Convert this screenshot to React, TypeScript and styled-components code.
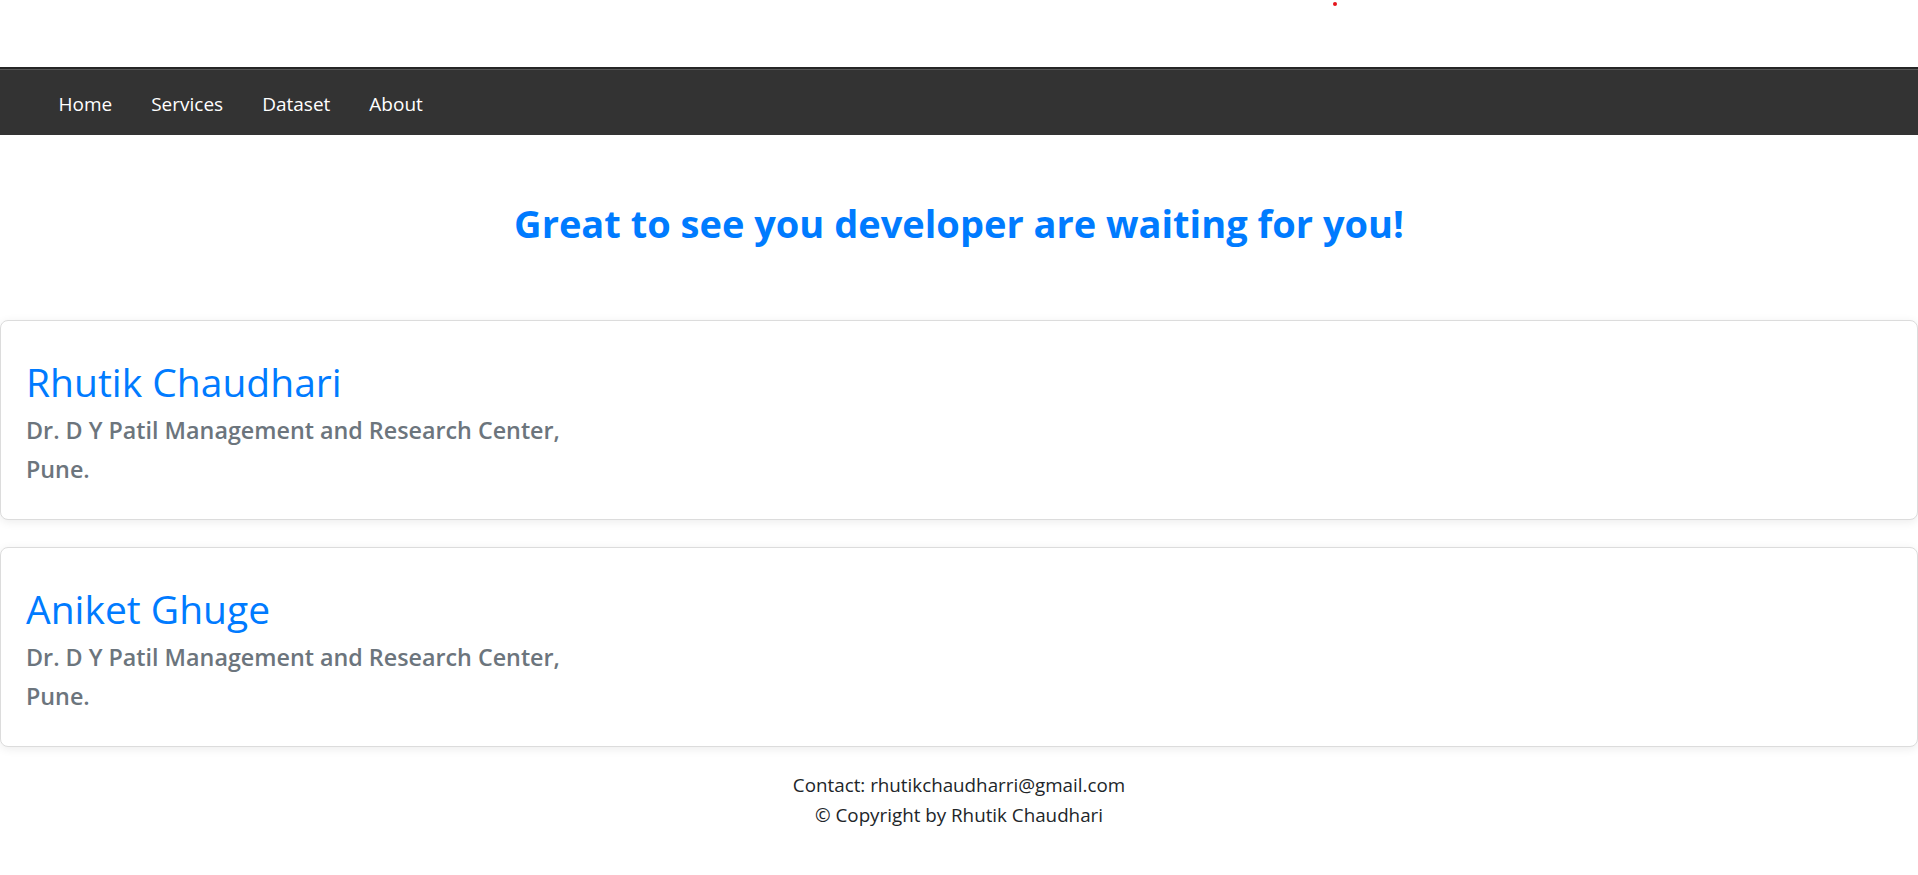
import * as React from 'react';
import styled, { createGlobalStyle } from 'styled-components';

const fontStack = '"Open Sans", "Noto Sans", "Liberation Sans", sans-serif';
const primary = '#007bff';
const muted = '#6c757d';

const GlobalStyle = createGlobalStyle`
  html, body {
    margin: 0;
    padding: 0;
    background: #fff;
  }
  body {
    font-family: ${fontStack};
    color: #212529;
  }
  * {
    box-sizing: border-box;
  }
`;

const TopStrip = styled.div`
  position: relative;
  height: 67px;
`;

// small red marker near the top edge
const Marker = styled.span`
  position: absolute;
  left: 1333px;
  top: 2px;
  width: 4px;
  height: 4px;
  border-radius: 50%;
  background: #e5141b;
`;

const Navbar = styled.nav`
  height: 68px;
  background: #333;
  border-top: 2px solid #262626;
  box-shadow: inset 0 1px 0 #575757;
  display: flex;
  align-items: center;
  padding-top: 4px;
`;

const NavList = styled.ul`
  list-style: none;
  margin: 0;
  padding: 0 0 0 39px;
  display: flex;
`;

const NavLink = styled.a`
  display: block;
  padding: 0 19.5px;
  color: #fff;
  font-size: 19px;
  text-decoration: none;
  cursor: pointer;
`;

const Heading = styled.h1`
  margin: 0;
  padding: 64px 0 0;
  height: 185px;
  text-align: center;
  color: ${primary};
  font-size: 38px;
  font-weight: 700;
  line-height: 48px;
`;

const CardList = styled.div`
  display: flex;
  flex-direction: column;
  gap: 27px;
`;

const Card = styled.div`
  height: 200px;
  background: #fff;
  border: 1px solid #dcdcdc;
  border-radius: 8px;
  box-shadow: 0 2px 10px rgba(0, 0, 0, 0.08);
  padding: 37px 25px;
`;

const Name = styled.h2`
  margin: 0 0 5px;
  color: ${primary};
  font-size: 39px;
  font-weight: 400;
  line-height: 48px;
`;

const Place = styled.p`
  margin: 0;
  color: ${muted};
  font-size: 23.3px;
  font-weight: 600;
  line-height: 39px;
`;

const Footer = styled.footer`
  padding: 23px 0 40px;
  text-align: center;
  font-size: 18.8px;
  line-height: 30px;
  color: #212529;
`;

const FooterLine = styled.div``;

const links = ['Home', 'Services', 'Dataset', 'About'];

const developers = [
  { name: 'Rhutik Chaudhari', place: 'Dr. D Y Patil Management and Research Center,', city: 'Pune.' },
  { name: 'Aniket Ghuge', place: 'Dr. D Y Patil Management and Research Center,', city: 'Pune.' },
];

export default function App() {
  return (
    <>
      <GlobalStyle />
      <TopStrip>
        <Marker />
      </TopStrip>
      <Navbar>
        <NavList>
          {links.map(l => (
            <li key={l}>
              <NavLink>{l}</NavLink>
            </li>
          ))}
        </NavList>
      </Navbar>

      <Heading>Great to see you developer are waiting for you!</Heading>

      <CardList>
        {developers.map(d => (
          <Card key={d.name}>
            <Name>{d.name}</Name>
            <Place>{d.place}</Place>
            <Place>{d.city}</Place>
          </Card>
        ))}
      </CardList>

      <Footer>
        <FooterLine>Contact: rhutikchaudharri@gmail.com</FooterLine>
        <FooterLine>© Copyright by Rhutik Chaudhari</FooterLine>
      </Footer>
    </>
  );
}
